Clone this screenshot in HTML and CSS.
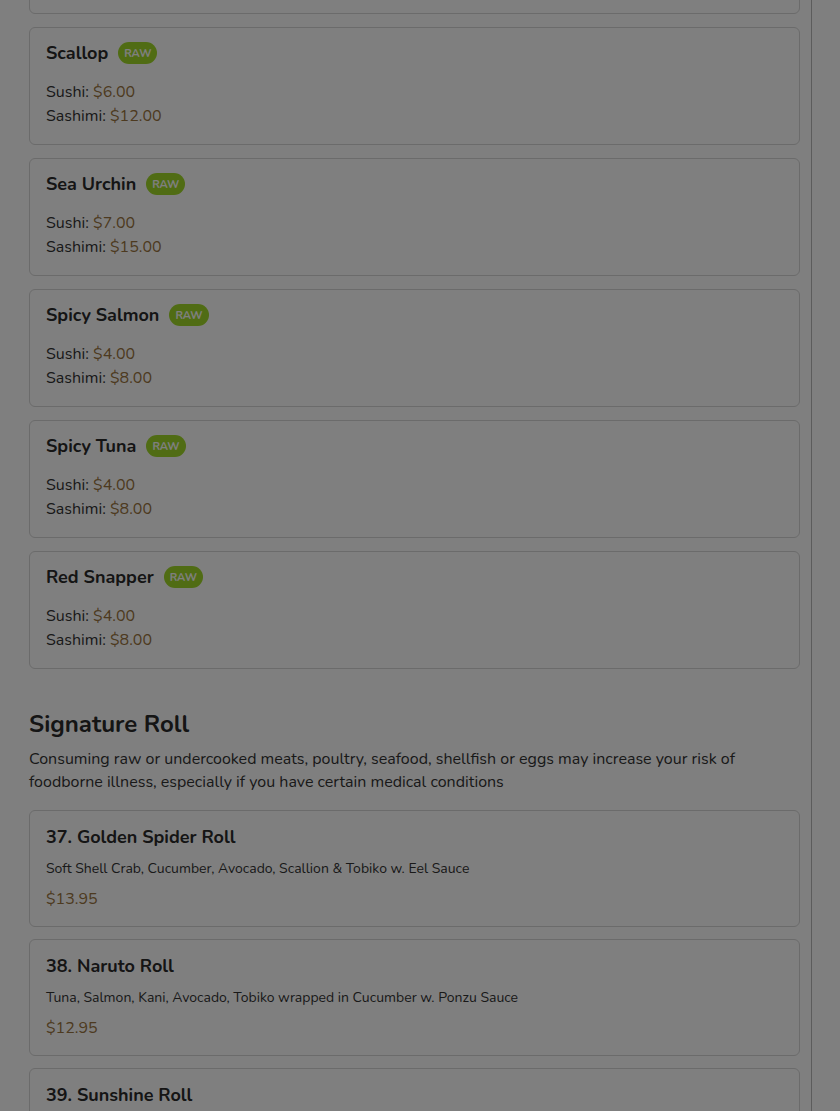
FILE: index.html
```html
<!DOCTYPE html>
<html lang="en">
<head>
<meta charset="utf-8">
<title>Menu</title>
<link rel="stylesheet" href="styles.css">
</head>
<body>
<main class="menu">
  <section class="section">
    <div class="card">
      <div class="card-head"><h3 class="item-name">Octopus</h3><span class="badge">RAW</span></div>
      <div class="prices">
        <div>Sushi: <span class="price">$4.00</span></div>
        <div>Sashimi: <span class="price">$8.00</span></div>
      </div>
    </div>
    <div class="card">
      <div class="card-head"><h3 class="item-name">Scallop</h3><span class="badge">RAW</span></div>
      <div class="prices">
        <div>Sushi: <span class="price">$6.00</span></div>
        <div>Sashimi: <span class="price">$12.00</span></div>
      </div>
    </div>
    <div class="card">
      <div class="card-head"><h3 class="item-name">Sea Urchin</h3><span class="badge">RAW</span></div>
      <div class="prices">
        <div>Sushi: <span class="price">$7.00</span></div>
        <div>Sashimi: <span class="price">$15.00</span></div>
      </div>
    </div>
    <div class="card">
      <div class="card-head"><h3 class="item-name">Spicy Salmon</h3><span class="badge">RAW</span></div>
      <div class="prices">
        <div>Sushi: <span class="price">$4.00</span></div>
        <div>Sashimi: <span class="price">$8.00</span></div>
      </div>
    </div>
    <div class="card">
      <div class="card-head"><h3 class="item-name">Spicy Tuna</h3><span class="badge">RAW</span></div>
      <div class="prices">
        <div>Sushi: <span class="price">$4.00</span></div>
        <div>Sashimi: <span class="price">$8.00</span></div>
      </div>
    </div>
    <div class="card">
      <div class="card-head"><h3 class="item-name">Red Snapper</h3><span class="badge">RAW</span></div>
      <div class="prices">
        <div>Sushi: <span class="price">$4.00</span></div>
        <div>Sashimi: <span class="price">$8.00</span></div>
      </div>
    </div>
  </section>

  <section class="section section-roll">
    <h2 class="section-title">Signature Roll</h2>
    <p class="section-note">Consuming raw or undercooked meats, poultry, seafood, shellfish or eggs may increase your risk of foodborne illness, especially if you have certain medical conditions</p>
    <div class="card card-roll">
      <div class="card-head"><h3 class="item-name">37. Golden Spider Roll</h3></div>
      <p class="desc">Soft Shell Crab, Cucumber, Avocado, Scallion &amp; Tobiko w. Eel Sauce</p>
      <div class="price single">$13.95</div>
    </div>
    <div class="card card-roll">
      <div class="card-head"><h3 class="item-name">38. Naruto Roll</h3></div>
      <p class="desc">Tuna, Salmon, Kani, Avocado, Tobiko wrapped in Cucumber w. Ponzu Sauce</p>
      <div class="price single">$12.95</div>
    </div>
    <div class="card card-roll">
      <div class="card-head"><h3 class="item-name">39. Sunshine Roll</h3></div>
      <p class="desc">Spicy Tuna, Avocado topped w. Salmon &amp; Mango Sauce</p>
      <div class="price single">$13.95</div>
    </div>
  </section>
</main>
<div class="overlay"></div>
</body>
</html>
```

FILE: styles.css
```css
* { box-sizing: border-box; }

html, body {
  margin: 0;
  padding: 0;
  background: #ffffff;
}

body {
  font-family: "Nunito", Lato, "Noto Sans", sans-serif;
  color: #333333;
  overflow: hidden;
  height: 1111px;
}

.menu {
  width: 812px;
  min-height: 1400px;
  padding: 0 11px 0 29px;
  border-right: 1px solid #b8b8b8;
  margin-top: -104px;
}

.section {
  display: flex;
  flex-direction: column;
  gap: 13px;
}

.section-roll {
  margin-top: 41px;
  gap: 12px;
}

.section-title {
  margin: 0;
  font-size: 24px;
  line-height: 29px;
  font-weight: 700;
  color: #2a2a2a;
}

.section-note {
  margin: -3px 0 4px;
  font-size: 16px;
  line-height: 23px;
  color: #333333;
}

.card {
  border: 1px solid #d6d6d6;
  border-radius: 6px;
  padding: 14px 16px 16px;
  background: #ffffff;
}

.card-roll {
  padding: 15px 16px 15px;
}

.card-head {
  display: flex;
  align-items: center;
  gap: 10px;
  min-height: 22px;
}

.item-name {
  margin: 0;
  font-size: 18px;
  line-height: 22px;
  font-weight: 700;
  color: #2a2a2a;
}

.badge {
  display: inline-flex;
  align-items: center;
  height: 22px;
  padding: 0 6px;
  border-radius: 11px;
  background: #a0d828;
  color: #ffffff;
  font-size: 11px;
  font-weight: 700;
}

.prices {
  margin-top: 16px;
  font-size: 16px;
  line-height: 24px;
  color: #333333;
}

.price {
  color: #9a7440;
}

.desc {
  margin: 11px 0 0;
  font-size: 14px;
  line-height: 20px;
  color: #333333;
}

.price.single {
  margin-top: 8px;
  font-size: 16px;
  line-height: 24px;
}

.overlay {
  position: fixed;
  inset: 0;
  background: rgba(0, 0, 0, 0.5);
}
```
